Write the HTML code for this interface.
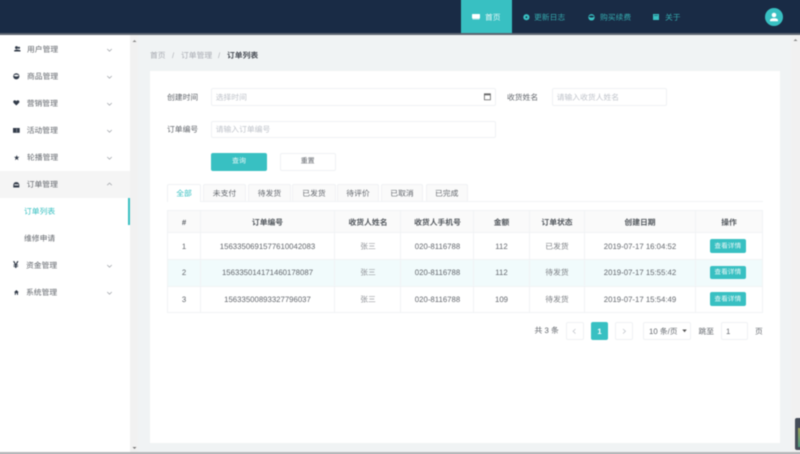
<!DOCTYPE html>
<html><head><meta charset="utf-8"><style>
*{box-sizing:border-box;margin:0;padding:0}
html,body{width:800px;height:454px;overflow:hidden;background:#fff}
body{font-family:"Liberation Sans","Noto Sans CJK SC",sans-serif;font-size:7.8px;color:#63676d;position:relative;text-rendering:geometricPrecision}
#w{position:absolute;left:-6px;top:-6px;width:812px;height:466px;filter:blur(.4px)}
#r{position:absolute;left:6px;top:6px;width:800px;height:454px}
.a{position:absolute}
.t{position:absolute;white-space:nowrap;line-height:12px;transform:translateY(-5.2px)}
.c{position:absolute;white-space:nowrap;line-height:12px;transform:translate(-50%,-5.2px)}
.b{position:absolute;background:#fff;border:1px solid #eff1f4;border-radius:2px}
.ph{color:#c0c4cb}
.th{font-weight:bold;color:#53585e}
.tab{position:absolute;top:184.300px;height:17px;background:#fafafa;border:1px solid #f0f2f4;border-bottom:0;border-radius:2px 2px 0 0}
.l{position:absolute;background:#f1f3f5}
.v{position:absolute;top:210px;width:1px;height:102.500px;background:#f1f3f5}
.d{position:absolute;left:710px;width:35.700px;height:13.400px;background:#38c0c2;border-radius:2px}
.ds{color:#e4f6f6;font-size:6.700px}
svg{position:absolute;overflow:visible}
</style></head><body><div id="w"><div id="r">
<div class="a" style="left:-6px;top:-6px;width:812px;height:39px;background:#192b45"></div>
<div class="a" style="left:-6px;top:33px;width:812px;height:2px;background:#5c6470"></div>
<div class="a" style="left:461px;top:-6px;width:51px;height:39px;background:#38c0c2"></div>
<svg style="left:472px;top:14px" width="9" height="6"><rect width="8" height="4.500" rx=".6" fill="#fff"/><rect x=".5" y="4.700" width="7" height=".8" fill="#d5f2f2"/></svg>
<div class="t" style="left:485px;top:16.500px;color:#e4f6f6">首页</div>
<svg style="left:522.500px;top:13.500px" width="8" height="7"><circle cx="3.400" cy="3.200" r="3.100" fill="#38c0c2"/><circle cx="3.400" cy="3.200" r=".9" fill="#192b45"/></svg>
<div class="t" style="left:534px;top:16.500px;color:#35a9ad">更新日志</div>
<svg style="left:588px;top:13.500px" width="8" height="7"><circle cx="3.500" cy="3.300" r="3.200" fill="#38c0c2"/><path d="M.6 2.600Q3.500 4.600 6.400 2.600Q3.500 .4 .6 2.600" fill="#192b45"/></svg>
<div class="t" style="left:600px;top:16.500px;color:#35a9ad">购买续费</div>
<svg style="left:653px;top:13.500px" width="7" height="7"><rect width="6" height="6" fill="#38c0c2"/><rect x="1" y="1" width="4" height="1" fill="#192b45" opacity=".5"/></svg>
<div class="t" style="left:665px;top:16.500px;color:#35a9ad">关于</div>
<div class="a" style="left:765px;top:8px;width:18px;height:18px;border-radius:50%;background:#38c0c2"></div>
<svg style="left:769px;top:12px" width="10" height="10"><circle cx="5" cy="3" r="2.300" fill="#fff"/><path d="M1 9.300V8.300Q1 6.800 3.500 6.300H6.500Q9 6.800 9 8.300V9.300Z" fill="#fff"/></svg>

<div class="a" style="left:-6px;top:35px;width:135.500px;height:417px;background:#fff"></div>
<div class="a" style="left:129.500px;top:35px;width:8.500px;height:417px;background:#f1f1f1"></div>
<div class="a" style="left:138px;top:35px;width:653px;height:417px;background:#f0f3f4"></div>
<div class="a" style="left:791px;top:35px;width:15px;height:417px;background:#f1f1f1"></div>
<div class="a" style="left:-6px;top:452px;width:812px;height:8px;background:#b5b7b9"></div>
<svg style="left:132px;top:39px" width="5" height="4"><path d="M.500 3L2.500 1L4.500 3Z" fill="#888"/></svg>
<svg style="left:132px;top:446px" width="5" height="4"><path d="M.500 1L2.500 3L4.500 1Z" fill="#777"/></svg>
<svg style="left:793px;top:38px" width="5" height="4"><path d="M.500 3L2.500 1L4.500 3Z" fill="#888"/></svg>
<div class="a" style="left:795px;top:417.500px;width:11px;height:32px;background:#454c58;border-radius:2px 0 0 2px"></div>
<div class="a" style="left:797.500px;top:428px;width:8px;height:19px;background:linear-gradient(#a0a45a,#4c9a80)"></div>

<div class="a" style="left:-6px;top:170.700px;width:135.500px;height:27px;background:#f5f5f5"></div>
<div class="a" style="left:128.300px;top:197.700px;width:1.800px;height:27px;background:#38c0c2"></div>

<svg style="left:13.500px;top:46px" width="7" height="6"><circle cx="2.500" cy="1.600" r="1.500" fill="#333c4a"/><circle cx="5" cy="1.800" r="1.100" fill="#333c4a"/><path d="M.2 5.500V4.300Q2.500 2.800 6.500 4.300V5.500Z" fill="#333c4a"/></svg>
<div class="t" style="left:27px;top:49px">用户管理</div>
<svg style="left:13.300px;top:73px" width="7" height="7"><circle cx="3.300" cy="3.300" r="3.100" fill="#333c4a"/><path d="M.6 2.500Q3.300 4.500 6 2.500Q3.300 .7 .6 2.500Z" fill="#fff"/></svg>
<div class="t" style="left:27px;top:76px">商品管理</div>
<svg style="left:13.300px;top:100px" width="7" height="6"><path d="M3.300 5.500L.4 2.600Q-.3 .5 1.700 .2Q2.900 .2 3.300 1.200Q3.700 .2 4.900 .2Q6.900 .5 6.200 2.600Z" fill="#333c4a"/></svg>
<div class="t" style="left:26.700px;top:103px">营销管理</div>
<svg style="left:13.300px;top:127.500px" width="7" height="5"><rect width="6.700" height="4.800" fill="#333c4a"/><rect x="3.300" y=".5" width=".8" height="3.800" fill="#8a909a"/></svg>
<div class="t" style="left:26.700px;top:130px">活动管理</div>
<svg style="left:14px;top:154.700px" width="6" height="6"><path d="M2.700 0L3.400 1.900H5.400L3.800 3.100L4.400 5.200L2.700 4L1 5.200L1.600 3.100L0 1.900H2Z" fill="#333c4a"/></svg>
<div class="t" style="left:27px;top:157px">轮播管理</div>
<svg style="left:13.300px;top:181.500px" width="7" height="6"><path d="M.3 3Q.6 .1 3.300 .1Q6 .1 6.300 3V5.500H.3Z" fill="#333c4a"/><rect x="1.300" y="2.300" width="4.200" height="1.100" fill="#eee"/></svg>
<div class="t" style="left:26.700px;top:184px">订单管理</div>
<div class="t" style="left:24px;top:211px;color:#38c0c2">订单列表</div>
<div class="t" style="left:24px;top:238px">维修申请</div>
<div class="t" style="left:13px;top:264.500px;color:#333c4a;font-weight:bold;font-size:10px">¥</div>
<div class="t" style="left:26px;top:265px">资金管理</div>
<svg style="left:14px;top:289.700px" width="5" height="5"><path d="M2.400 0L4.800 2.300H4V4.900H3V3.300H1.800V4.900H.8V2.300H0Z" fill="#333c4a"/></svg>
<div class="t" style="left:26px;top:292px">系统管理</div>
<svg style="left:106px;top:47.500px" width="7" height="5"><path d="M1.200 1L3.500 3.200L5.800 1" fill="none" stroke="#a5a8ad" stroke-width=".8"/></svg>
<svg style="left:106px;top:74.500px" width="7" height="5"><path d="M1.200 1L3.500 3.200L5.800 1" fill="none" stroke="#a5a8ad" stroke-width=".8"/></svg>
<svg style="left:106px;top:101.500px" width="7" height="5"><path d="M1.200 1L3.500 3.200L5.800 1" fill="none" stroke="#a5a8ad" stroke-width=".8"/></svg>
<svg style="left:106px;top:128.500px" width="7" height="5"><path d="M1.200 1L3.500 3.200L5.800 1" fill="none" stroke="#a5a8ad" stroke-width=".8"/></svg>
<svg style="left:106px;top:155.500px" width="7" height="5"><path d="M1.200 1L3.500 3.200L5.800 1" fill="none" stroke="#a5a8ad" stroke-width=".8"/></svg>
<svg style="left:106px;top:182px" width="7" height="5"><path d="M1.200 3.200L3.500 1L5.800 3.200" fill="none" stroke="#a5a8ad" stroke-width=".8"/></svg>
<svg style="left:106px;top:263.500px" width="7" height="5"><path d="M1.200 1L3.500 3.200L5.800 1" fill="none" stroke="#a5a8ad" stroke-width=".8"/></svg>
<svg style="left:106px;top:290.500px" width="7" height="5"><path d="M1.200 1L3.500 3.200L5.800 1" fill="none" stroke="#a5a8ad" stroke-width=".8"/></svg>

<div class="t" style="left:150px;top:55px;color:#a8abb2">首页</div>
<div class="t" style="left:172px;top:55px;color:#b0b3b8">/</div>
<div class="t" style="left:181px;top:55px;color:#a8abb2">订单管理</div>
<div class="t" style="left:218px;top:55px;color:#b0b3b8">/</div>
<div class="t" style="left:227px;top:55px;color:#4a4f57;font-weight:bold">订单列表</div>

<div class="a" style="left:150px;top:70.700px;width:629.500px;height:372px;background:#fff"></div>

<div class="t" style="left:167px;top:97px">创建时间</div>
<div class="b" style="left:211px;top:88.300px;width:285px;height:17.500px"></div>
<div class="t ph" style="left:215.700px;top:97px">选择时间</div>
<svg style="left:484px;top:93px" width="7" height="8"><rect x=".4" y=".8" width="6" height="6" fill="none" stroke="#666" stroke-width=".8"/><rect x=".4" y=".8" width="6" height="1.500" fill="#666"/></svg>
<div class="t" style="left:507px;top:97px">收货姓名</div>
<div class="b" style="left:552.300px;top:88.300px;width:114.500px;height:17.500px"></div>
<div class="t ph" style="left:556.700px;top:97px">请输入收货人姓名</div>
<div class="t" style="left:167px;top:129px">订单编号</div>
<div class="b" style="left:211px;top:120.700px;width:285px;height:17.600px"></div>
<div class="t ph" style="left:215.700px;top:129px">请输入订单编号</div>
<div class="a" style="left:211px;top:152.700px;width:55.700px;height:18px;background:#38c0c2;border-radius:2px"></div>
<div class="c" style="left:239px;top:161px;color:#e4f6f6;font-size:7px">查询</div>
<div class="b" style="left:280px;top:152.700px;width:55.700px;height:18px"></div>
<div class="c" style="left:307.700px;top:161px;font-size:7px">重置</div>

<div class="l" style="left:167px;top:201px;width:596px;height:1px"></div>
<div class="tab" style="left:167px;width:34px;height:18px;background:#fff"></div>
<div class="tab" style="left:203.300px;width:42.400px"></div>
<div class="tab" style="left:248px;width:43px"></div>
<div class="tab" style="left:292.300px;width:43.400px"></div>
<div class="tab" style="left:337px;width:42px"></div>
<div class="tab" style="left:381.300px;width:41.700px"></div>
<div class="tab" style="left:425.700px;width:42px"></div>
<div class="c" style="left:184px;top:193px;color:#38c0c2">全部</div>
<div class="c" style="left:224.500px;top:193px">未支付</div>
<div class="c" style="left:269.500px;top:193px">待发货</div>
<div class="c" style="left:314px;top:193px">已发货</div>
<div class="c" style="left:358px;top:193px">待评价</div>
<div class="c" style="left:402px;top:193px">已取消</div>
<div class="c" style="left:446.700px;top:193px">已完成</div>

<div class="a" style="left:167px;top:210px;width:596px;height:22.300px;background:#fafafa"></div>
<div class="a" style="left:167px;top:259px;width:596px;height:27px;background:#f1fbfc"></div>
<div class="a" style="left:167px;top:210px;width:596px;height:102.500px;border:1px solid #f1f3f5"></div>
<div class="l" style="left:167px;top:232px;width:596px;height:1px"></div>
<div class="l" style="left:167px;top:259px;width:596px;height:1px"></div>
<div class="l" style="left:167px;top:286px;width:596px;height:1px"></div>
<div class="v" style="left:200px"></div>
<div class="v" style="left:334px"></div>
<div class="v" style="left:400px"></div>
<div class="v" style="left:473px"></div>
<div class="v" style="left:529px"></div>
<div class="v" style="left:584px"></div>
<div class="v" style="left:695px"></div>

<div class="c th" style="left:184px;top:222px">#</div>
<div class="c th" style="left:267.500px;top:222px">订单编号</div>
<div class="c th" style="left:368px;top:222px">收货人姓名</div>
<div class="c th" style="left:437.500px;top:222px">收货人手机号</div>
<div class="c th" style="left:501.500px;top:222px">金额</div>
<div class="c th" style="left:557px;top:222px">订单状态</div>
<div class="c th" style="left:640px;top:222px">创建日期</div>
<div class="c th" style="left:729px;top:222px">操作</div>

<div class="c" style="left:184px;top:245.700px">1</div>
<div class="c" style="left:267.500px;top:245.700px">1563350691577610042083</div>
<div class="c" style="left:368px;top:245.700px;color:#8d9095">张三</div>
<div class="c" style="left:437.500px;top:245.700px">020-8116788</div>
<div class="c" style="left:501.500px;top:245.700px">112</div>
<div class="c" style="left:557px;top:245.700px;color:#7d8085">已发货</div>
<div class="c" style="left:640px;top:245.700px">2019-07-17 16:04:52</div>
<div class="d" style="top:239.300px"></div>
<div class="c ds" style="left:727.800px;top:245.700px">查看详情</div>

<div class="c" style="left:184px;top:272.300px">2</div>
<div class="c" style="left:267.500px;top:272.300px">156335014171460178087</div>
<div class="c" style="left:368px;top:272.300px;color:#8d9095">张三</div>
<div class="c" style="left:437.500px;top:272.300px">020-8116788</div>
<div class="c" style="left:501.500px;top:272.300px">112</div>
<div class="c" style="left:557px;top:272.300px;color:#7d8085">待发货</div>
<div class="c" style="left:640px;top:272.300px">2019-07-17 15:55:42</div>
<div class="d" style="top:266px"></div>
<div class="c ds" style="left:727.800px;top:272.300px">查看详情</div>

<div class="c" style="left:184px;top:299px">3</div>
<div class="c" style="left:267.500px;top:299px">15633500893327796037</div>
<div class="c" style="left:368px;top:299px;color:#8d9095">张三</div>
<div class="c" style="left:437.500px;top:299px">020-8116788</div>
<div class="c" style="left:501.500px;top:299px">109</div>
<div class="c" style="left:557px;top:299px;color:#7d8085">待发货</div>
<div class="c" style="left:640px;top:299px">2019-07-17 15:54:49</div>
<div class="d" style="top:292.300px"></div>
<div class="c ds" style="left:727.800px;top:299px">查看详情</div>

<div class="t" style="left:534.500px;top:330px">共 3 条</div>
<div class="b" style="left:566.300px;top:322.300px;width:17.700px;height:17.400px"></div>
<svg style="left:572px;top:328px" width="5" height="7"><path d="M3.500 1L1 3.300L3.500 5.600" fill="none" stroke="#c5c8ce" stroke-width=".8"/></svg>
<div class="a" style="left:590.700px;top:322.300px;width:17.600px;height:17.400px;background:#38c0c2;border-radius:2px"></div>
<div class="c" style="left:599.500px;top:330.500px;color:#fff;font-weight:bold">1</div>
<div class="b" style="left:615.300px;top:322.300px;width:17.400px;height:17.400px"></div>
<svg style="left:622px;top:328px" width="5" height="7"><path d="M1 1L3.500 3.300L1 5.600" fill="none" stroke="#c5c8ce" stroke-width=".8"/></svg>
<div class="b" style="left:643.300px;top:322.300px;width:47.400px;height:17.400px"></div>
<div class="t" style="left:649px;top:330.500px">10 条/页</div>
<svg style="left:681.500px;top:329px" width="6" height="4"><path d="M.3.500H4.800L2.550 3.300Z" fill="#555"/></svg>
<div class="t" style="left:698.500px;top:330.500px">跳至</div>
<div class="b" style="left:721px;top:322.300px;width:27.300px;height:17.400px"></div>
<div class="t" style="left:726px;top:330.500px">1</div>
<div class="t" style="left:755px;top:330.500px">页</div>
</div></div></body></html>
